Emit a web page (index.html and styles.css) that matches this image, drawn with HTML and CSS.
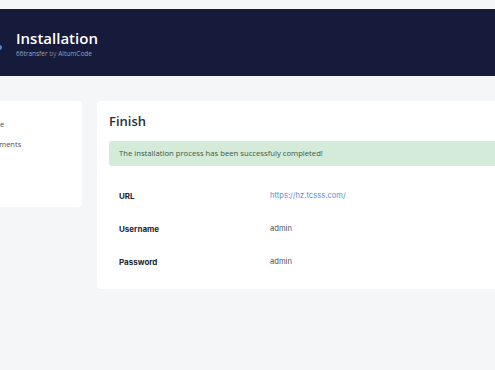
FILE: index.html
```html
<!DOCTYPE html>
<html lang="en">
<head>
    <meta charset="UTF-8">
    <meta name="viewport" content="width=device-width, initial-scale=1.0">
    <title>Installation</title>
    <link rel="stylesheet" href="styles.css">
</head>
<body>
    <header class="top">
        <span class="top-dot"></span>
        <div class="top-text">
            <h1>Installation</h1>
            <p>66transfer <span class="by">by</span> AltumCode</p>
        </div>
    </header>

    <div class="content">
        <nav class="steps">
            <div class="step">Welcome</div>
            <div class="step">Requirements</div>
        </nav>

        <main class="card">
            <h2>Finish</h2>
            <div class="alert">The installation process has been successfuly completed!</div>

            <table class="details">
                <tr>
                    <th>URL</th>
                    <td><a href="#">https://hz.tcsss.com/</a></td>
                </tr>
                <tr>
                    <th>Username</th>
                    <td>admin</td>
                </tr>
                <tr>
                    <th>Password</th>
                    <td>admin</td>
                </tr>
            </table>
        </main>
    </div>
</body>
</html>
```

FILE: styles.css
```css
body {
    font-family: "Open Sans", Arial, sans-serif;
    background-color: #f5f6f8;
    color: #3a3f48;
    margin: 0;
    padding: 9px 0 0;
    overflow: hidden;
}

.top {
    background-color: #161b3b;
    height: 67px;
    display: flex;
    align-items: center;
    color: #fff;
}

.top-dot {
    width: 5px;
    height: 5px;
    border-radius: 50%;
    background-color: #3b8fe8;
    margin: 10px 0 0 -3px;
}

.top-text {
    margin-left: 14px;
    margin-top: 1px;
}

.top h1 {
    font-size: 15px;
    font-weight: 600;
    margin: 0;
    line-height: 20px;
}

.top p {
    font-size: 6.5px;
    color: #9aa0b8;
    margin: 1px 0 0;
}

.top .by {
    color: #7a80a0;
}

.content {
    display: flex;
    align-items: flex-start;
    gap: 15px;
    margin-top: 25px;
}

.steps {
    background-color: #fff;
    width: 123px;
    flex-shrink: 0;
    margin-left: -41px;
    height: 106px;
    padding: 18px 13px;
    box-sizing: border-box;
    border-radius: 4px;
}

.step {
    font-size: 7.5px;
    color: #4a4f58;
    line-height: 10px;
    margin-bottom: 10px;
    white-space: nowrap;
}

.card {
    background-color: #fff;
    width: 430px;
    flex-shrink: 0;
    padding: 12px 12px 11px;
    box-sizing: border-box;
    border-radius: 4px;
}

.card h2 {
    font-size: 13px;
    font-weight: 600;
    color: #2b2f36;
    margin: 0 0 12px;
    line-height: 16px;
}

.alert {
    background-color: #d3ebd8;
    color: #3d5845;
    font-size: 7.7px;
    height: 25px;
    line-height: 25px;
    padding: 0 10px;
    border-radius: 3px;
}

.details {
    border-collapse: collapse;
    margin-top: 13px;
    width: 100%;
    font-family: Inter, "Open Sans", sans-serif;
    font-size: 8px;
}

.details th {
    text-align: left;
    font-weight: 700;
    color: #23262c;
    width: 141px;
    padding: 0 10px;
    height: 33px;
}

.details td {
    color: #4d5158;
    font-size: 7.6px;
    padding: 0;
    height: 33px;
}

.details a {
    color: #5a8bd5;
    text-decoration: none;
}
```
